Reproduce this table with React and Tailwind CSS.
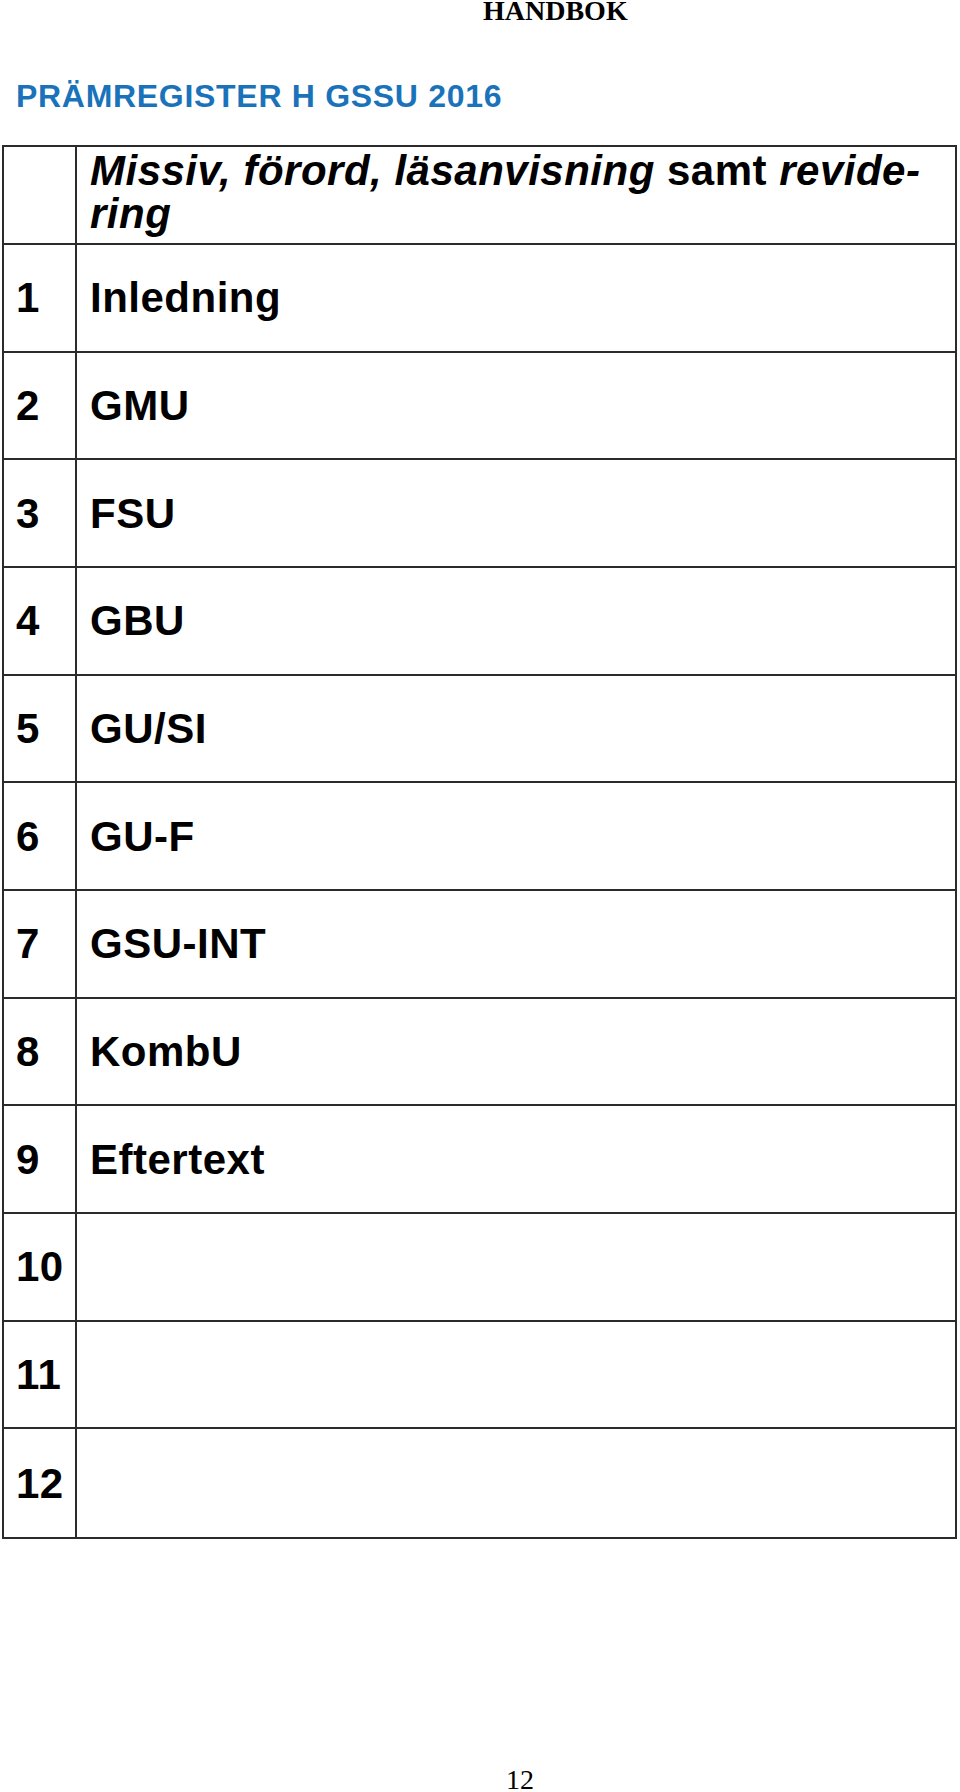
import React from 'react';

const rows = [
  { n: '1', label: 'Inledning' },
  { n: '2', label: 'GMU' },
  { n: '3', label: 'FSU' },
  { n: '4', label: 'GBU' },
  { n: '5', label: 'GU/SI' },
  { n: '6', label: 'GU-F' },
  { n: '7', label: 'GSU-INT' },
  { n: '8', label: 'KombU' },
  { n: '9', label: 'Eftertext' },
  { n: '10', label: '' },
  { n: '11', label: '' },
  { n: '12', label: '' },
];

const sans = { fontFamily: '"Liberation Sans", Arial, sans-serif' };
const serif = { fontFamily: '"Liberation Serif", "Times New Roman", serif' };

const App = () => {
  return (
    <div className="w-[960px] min-h-[1792px] bg-white text-black overflow-hidden">
      <p className="h-[22px] pl-[483px] text-[28px] leading-[22px] font-bold" style={serif}>
        HANDBOK
      </p>

      <h1
        className="mt-[58px] pl-[16px] text-[32px] leading-[32px] font-bold tracking-[0.7px] text-[#1a73ba]"
        style={sans}
      >
        PRÄMREGISTER H GSSU 2016
      </h1>

      <div
        className="mt-[33px] ml-[2px] w-[955px] border-2 border-[#2b2b2b] tracking-[0.5px]"
        style={sans}
      >
        <div className="flex h-[98px] border-b-2 border-[#2b2b2b]">
          <div className="w-[73px] shrink-0 border-r-2 border-[#2b2b2b]" />
          <div className="pt-[2px] pl-[13px] text-[42px] leading-[43px] font-bold">
            <i>Missiv, förord, läsanvisning</i> samt <i>revide-</i>
            <br />
            <i>ring</i>
          </div>
        </div>

        {rows.map((r, i) => (
          <div
            key={r.n}
            className={
              'flex h-[107.67px] ' +
              (i < rows.length - 1 ? 'border-b-2 border-[#2b2b2b]' : '')
            }
          >
            <div className="flex w-[73px] shrink-0 items-center border-r-2 border-[#2b2b2b] pl-[12px] text-[42px] font-bold">
              {r.n}
            </div>
            <div className="flex items-center pl-[13px] text-[42px] font-bold">{r.label}</div>
          </div>
        ))}
      </div>

      <p className="mt-[231px] pl-[506px] text-[28px] leading-[20px]" style={serif}>
        12
      </p>
    </div>
  );
};

export default App;
